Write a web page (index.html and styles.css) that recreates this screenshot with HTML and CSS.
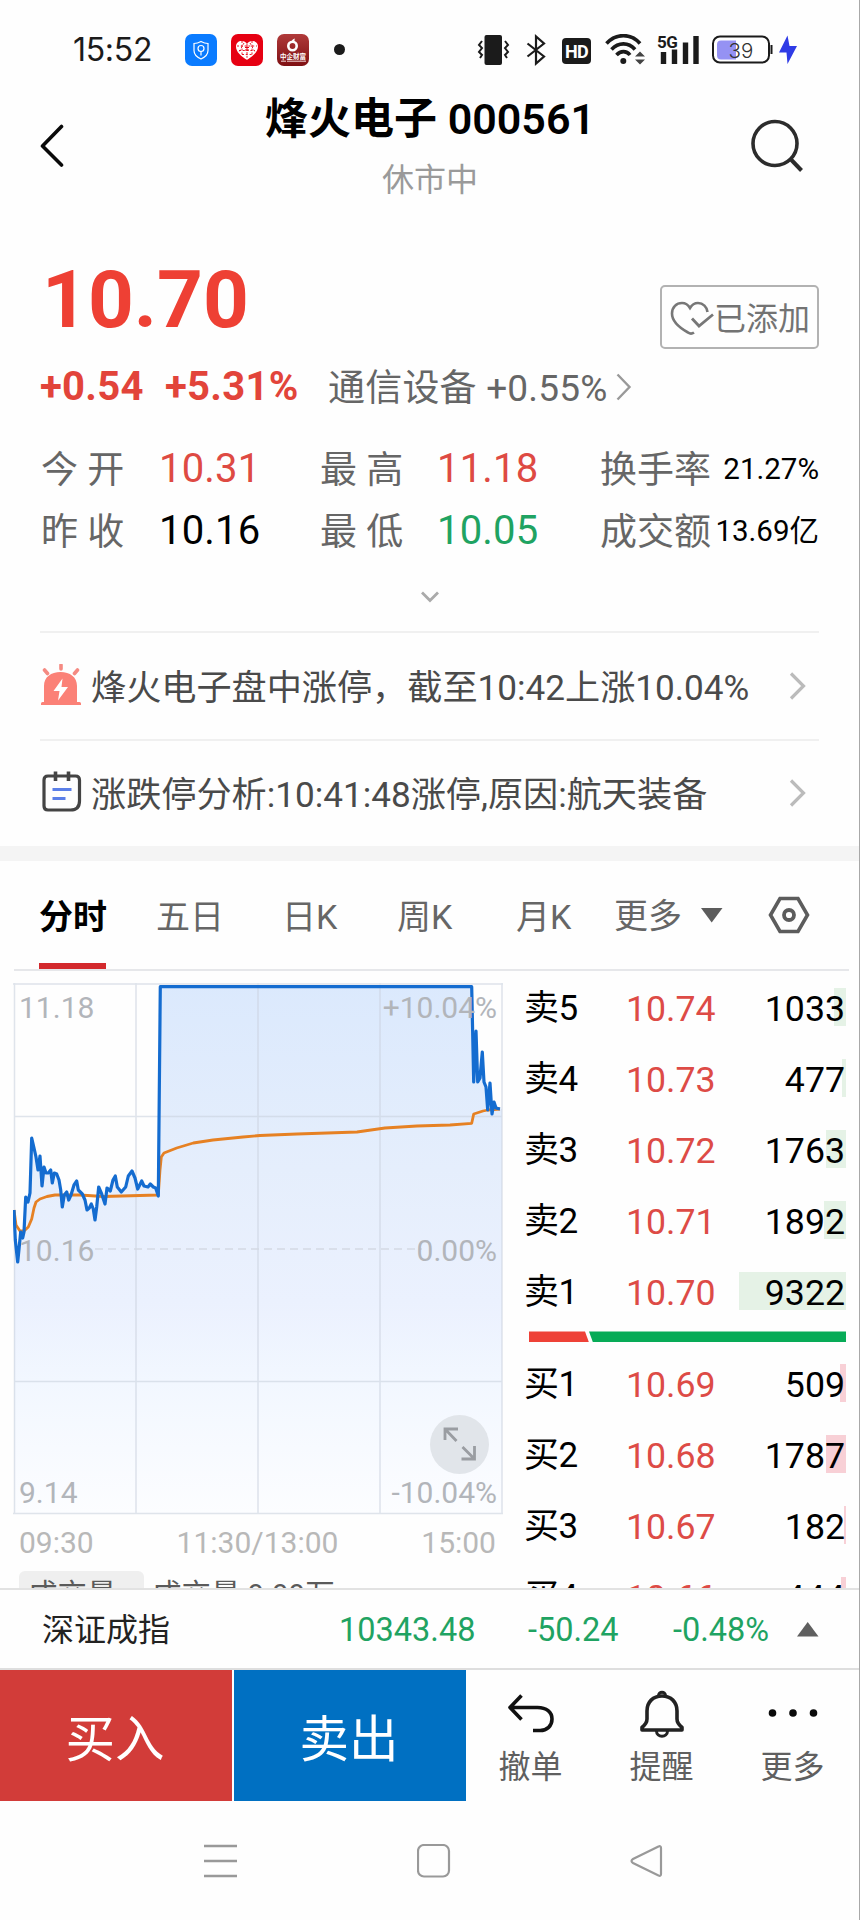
FILE: index.html
```html
<!DOCTYPE html>
<html lang="zh-CN">
<head>
    <meta charset="UTF-8">
    <meta name="viewport" content="width=device-width, initial-scale=1.0">
    <title>烽火电子 000561</title>
    <link rel="stylesheet" href="styles.css">
</head>
<body>
<div class="phone">

    <!-- Status bar -->
    <div class="status-bar">
        <span class="clock">15:52</span>
        <div class="app-icons">
            <svg width="32" height="32" viewBox="0 0 32 32">
                <rect width="32" height="32" rx="7" fill="#0a7bff"/>
                <path d="M16 7.500c2.500 1.300 4.500 1.900 7 2v7c0 4-3 6.700-7 8.500-4-1.800-7-4.500-7-8.500v-7c2.500-.1 4.500-.7 7-2z" fill="none" stroke="#fff" stroke-width="1.200"/>
                <circle cx="16" cy="14.500" r="3" fill="none" stroke="#fff" stroke-width="1.200"/>
                <path d="M16 17.500v4" stroke="#fff" stroke-width="1.200"/>
            </svg>
            <svg width="32" height="32" viewBox="0 0 32 32">
                <rect width="32" height="32" rx="7" fill="#e60012"/>
                <path d="M16 26C10 22 5 18 5 12.500 5 9 7.500 7 10.500 7c2.500 0 4.500 1 5.500 3 1-2 3-3 5.500-3C24.500 7 27 9 27 12.500 27 18 22 22 16 26z" fill="#fff"/>
                <path d="M6 12h20M8 16.500h16M11 20.500h10M11 7v14M21 7v14M16 10v3.500M16 18v8M13 9l-5 9M19 9l5 9" stroke="#e60012" stroke-width="0.900" stroke-dasharray="2 1.800"/>
                <path d="M14 13.500h4M14 16h4M16 12v5" stroke="#e60012" stroke-width="1"/>
            </svg>
            <svg width="32" height="32" viewBox="0 0 32 32">
                <defs>
                    <linearGradient id="maroon" x1="0" y1="0" x2="0" y2="1">
                        <stop offset="0" stop-color="#b03a3a"/>
                        <stop offset="1" stop-color="#7e0f12"/>
                    </linearGradient>
                </defs>
                <rect width="32" height="32" rx="7" fill="url(#maroon)"/>
                <circle cx="15.500" cy="12" r="4.200" fill="none" stroke="#fff" stroke-width="2.600"/>
                <path d="M15 8c-.5-2 1-3 3-3.500-1 1.500 0 3-1 4" fill="#fff"/>
                <text x="16" y="25" class="app-text">中企财富</text>
                <path d="M4 27.200h5M10 27.200h19" stroke="#f3d9d9" stroke-width="1"/>
            </svg>
        </div>
        <span class="status-dot"></span>
        <div class="status-icons">
            <svg width="33" height="32" viewBox="0 0 33 32" class="i-vibrate">
                <rect x="7.500" y="1" width="17.500" height="30" rx="2" fill="#1b1b1b"/>
                <path d="M5 7l-3 4 3 3-3 4 3 3-2 3M28 7l3 4-3 3 3 4-3 3 2 3" fill="none" stroke="#1b1b1b" stroke-width="2"/>
            </svg>
            <svg width="20" height="32" viewBox="0 0 20 32" class="i-bt">
                <path d="M1.500 9.500L18 22.500 10 29.500V2.500L18 9.500 1.500 22.500" fill="none" stroke="#1b1b1b" stroke-width="2.200"/>
            </svg>
            <svg width="29" height="32" viewBox="0 0 29 32" class="i-hd">
                <rect x="0" y="4" width="29" height="26" rx="4" fill="#1b1b1b"/>
                <text x="14.500" y="23.500" class="hd-text">HD</text>
            </svg>
            <svg width="40" height="32" viewBox="0 0 40 32" class="i-wifi">
                <path d="M1.500 9.500C11 -1 26 -1 35 9.500M6.500 15.500c7-7.500 17-7.500 23.500 0M11.500 21c4-4.500 10-4.500 13.500 0" fill="none" stroke="#1b1b1b" stroke-width="3.600"/>
                <circle cx="18.300" cy="27" r="3" fill="#1b1b1b"/>
                <path d="M30 22.500l5-5 5 5zM30 25.500l5 5 5-5z" fill="#444"/>
            </svg>
            <svg width="43" height="32" viewBox="0 0 43 32" class="i-signal">
                <text x="0" y="13.500" class="g-text">5G</text>
                <path d="M6.500 18v12M17.500 15.500V30M28.500 8.500V30M39 2v28" stroke="#1b1b1b" stroke-width="5.400"/>
            </svg>
            <svg width="61" height="32" viewBox="0 0 61 32" class="i-battery">
                <rect x="1" y="2.500" width="56" height="26" rx="7" fill="#fff" stroke="#1b1b1b" stroke-width="2"/>
                <path d="M9 6.500h15v19H9a4 4 0 0 1-4-4v-11a4 4 0 0 1 4-4z" fill="#9592f3"/>
                <path d="M59.500 11v9" stroke="#1b1b1b" stroke-width="2"/>
                <text x="29" y="23.500" class="bat-text">39</text>
            </svg>
            <svg width="18" height="32" viewBox="0 0 18 32">
                <path d="M8.500 1.500L0 18.500h7.500L8.500 30 18 12h-7.500z" fill="#2f3be6"/>
            </svg>
        </div>
    </div>

    <!-- Title -->
    <header class="header">
        <svg width="24" height="44" viewBox="0 0 24 44">
            <path d="M21.500 2.500L2.500 22l19 19" fill="none" stroke="#0a0a0a" stroke-width="3.600" stroke-linecap="round" stroke-linejoin="round"/>
        </svg>
        <div class="title-box">
            <h1>烽火电子 000561</h1>
            <p>休市中</p>
        </div>
        <svg width="54" height="54" viewBox="0 0 54 54">
            <circle cx="25" cy="24.500" r="22" fill="none" stroke="#2c2c2c" stroke-width="3.600"/>
            <path d="M40.500 40l11 11.500" stroke="#2c2c2c" stroke-width="4"/>
        </svg>
    </header>

    <!-- Quote -->
    <section class="quote">
        <div class="price-row">
            <div class="price">10.70</div>
            <div class="added">
                <svg width="44" height="34" viewBox="0 0 44 34">
                    <path d="M24 31.500c-2 1.500-4 1.500-6 0C9 26.500 2 21 2 12.500 2 6 6.500 2 12 2c3.500 0 6 1.500 8 5 2-3.500 5-5 8-5 5 0 9 4 9.500 9" fill="none" stroke="#777" stroke-width="2.600"/>
                    <path d="M22 17.500l7 7.500 14-11.500" fill="none" stroke="#777" stroke-width="2.800"/>
                </svg>
                <span>已添加</span>
            </div>
        </div>
        <div class="change-row">
            <b class="diff">+0.54</b>
            <b class="pct">+5.31%</b>
            <span class="sector">通信设备 +0.55%</span>
            <svg width="16" height="28" viewBox="0 0 16 28">
                <path d="M1.500 1.500L13.500 14 1.500 26.500" fill="none" stroke="#999" stroke-width="2.400"/>
            </svg>
        </div>
        <div class="stats">
            <span class="label">今 开</span><span class="value up">10.31</span>
            <span class="label">最 高</span><span class="value up">11.18</span>
            <span class="label">换手率</span><span class="small">21.27%</span>
            <span class="label">昨 收</span><span class="value">10.16</span>
            <span class="label">最 低</span><span class="value down">10.05</span>
            <span class="label">成交额</span><span class="small">13.69亿</span>
        </div>
        <div class="expand">
            <svg width="18" height="12" viewBox="0 0 18 12">
                <path d="M1 1.500l8 8 8-8" fill="none" stroke="#aaa" stroke-width="2.800"/>
            </svg>
        </div>
    </section>

    <!-- Notices -->
    <div class="notice">
        <svg width="42" height="44" viewBox="0 0 42 44">
            <path d="M4 38V22C4 13 11 8 20.500 8S37 13 37 22v16h2.500q1.500 0 1.500 1.500V41H1v-1.500Q1 38 2.500 38z" fill="#fb8177"/>
            <path d="M21 1v4M4.500 6l3 3.500M37.500 6l-3 3.500" stroke="#f58a82" stroke-width="3.600" stroke-linecap="round"/>
            <path d="M22.500 14.500L13.500 27h6L18 36.500 28 23h-6.500z" fill="#fff"/>
        </svg>
        <span>烽火电子盘中涨停，截至10:42上涨10.04%</span>
        <svg class="arrow" width="18" height="28" viewBox="0 0 18 28">
            <path d="M2 1.500L14.500 14 2 26.500" fill="none" stroke="#bbb" stroke-width="3.200"/>
        </svg>
    </div>
    <div class="notice">
        <svg width="42" height="44" viewBox="0 0 42 44">
            <path d="M8 5h27.500q4 0 4 4v21q0 9-9 9H8q-4 0-4-4V9q0-4 4-4z" fill="none" stroke="#444" stroke-width="3.200"/>
            <path d="M15.500 0.500V10M28.500 0.500V10" stroke="#444" stroke-width="3.600"/>
            <path d="M12.500 18.500h19M12.500 27.500h13" stroke="#5b7fe8" stroke-width="3"/>
        </svg>
        <span>涨跌停分析:10:41:48涨停,原因:航天装备</span>
        <svg class="arrow" width="18" height="28" viewBox="0 0 18 28">
            <path d="M2 1.500L14.500 14 2 26.500" fill="none" stroke="#bbb" stroke-width="3.200"/>
        </svg>
    </div>

    <div class="band"></div>

    <!-- Chart tabs -->
    <nav class="tabs">
        <a class="tab active">分时</a>
        <a class="tab">五日</a>
        <a class="tab">日K</a>
        <a class="tab">周K</a>
        <a class="tab">月K</a>
        <a class="tab more">更多
            <svg width="22" height="15" viewBox="0 0 22 15"><path d="M0 0h21.500L10.700 14.500z" fill="#5c5c5c"/></svg>
        </a>
        <svg width="42" height="38" viewBox="0 0 42 38">
            <path d="M12 2.500h18L39.500 19 30 35.500H12L2.500 19z" fill="none" stroke="#5c5c5c" stroke-width="3.600"/>
            <circle cx="21" cy="19" r="5" fill="none" stroke="#5c5c5c" stroke-width="3.800"/>
        </svg>
    </nav>

    <!-- Chart and order book -->
    <main class="main">
        <div class="chart-col">
            <div class="chart">
                <svg width="490" height="532" viewBox="0 0 490 532">
                    <defs>
                        <linearGradient id="area" gradientUnits="userSpaceOnUse" x1="0" y1="0" x2="0" y2="531">
                            <stop offset="0" stop-color="#dbe9fd"/>
                            <stop offset="0.350" stop-color="#e5eefc"/>
                            <stop offset="0.600" stop-color="#ebf1fe"/>
                            <stop offset="0.750" stop-color="#f2f7ff"/>
                            <stop offset="1" stop-color="#fcfdff"/>
                        </linearGradient>
                    </defs>
                    <path fill="url(#area)" d="M1 227L2.300 257 4.700 279 7.700 249 9.700 255 11 249 12.700 214 15 219 17 210 18.700 155 21 165 23 174 25 187 27 173 29 203 31 184 33 190 35.300 190 37.700 187 39.300 200 41.300 190 43.700 191 46 197 47.700 207 49.300 224 51.300 212 53.700 209 55.700 217 58 212 61 202 63.700 198 65.300 207 69.300 211 72 217 74 227 76.300 225 78.300 221 80.300 226 82 237 83.700 224 85.700 204 88.700 211 92 221 94 205 97.300 208 100 197 102.300 193 104.300 204 108.300 209 112.700 204 115.300 193 119 188 122 195 124.700 206 128.700 198 131 203 135 204 137.300 201 140.300 204 142.700 205 145.300 213 147.300 3.700H458.700L460.700 99 463 48 464.700 99 467 95 469.300 69 471 99 473 104 474.700 127 477 100 479 131 481 119 483 125 489 126V530H1z"/>
                    <path d="M0 1h490M1 133.500h488M1 398.500h488M0 530.500h490M1.500 0v531M123 0v531M245 0v531M367 0v531M489 0v531" fill="none" stroke="#c9d2de" stroke-opacity="0.600" stroke-width="1.500"/>
                    <path d="M82 266h327" stroke="#d3d9e4" stroke-width="1.500" stroke-dasharray="8 5"/>
                    <path fill="none" stroke="#e68123" stroke-width="2.800" stroke-linejoin="round" d="M1 227L3 242 7 248H11L15.300 244 18.700 236 21 225 23 219 27 216 34 213.500 42 212H67L90 213.500 145.300 212 147 187 148.300 174 151 170 163.700 165 180.300 160 200 157 230 154 247 152.500 284 151 344 149 372 145 404 143 437 142 458.700 140.300 460.700 131 470 128 475 127 487 126"/>
                    <path fill="none" stroke="#146cd0" stroke-width="3.200" stroke-linejoin="round" d="M1 227L2.300 257 4.700 279 7.700 249 9.700 255 11 249 12.700 214 15 219 17 210 18.700 155 21 165 23 174 25 187 27 173 29 203 31 184 33 190 35.300 190 37.700 187 39.300 200 41.300 190 43.700 191 46 197 47.700 207 49.300 224 51.300 212 53.700 209 55.700 217 58 212 61 202 63.700 198 65.300 207 69.300 211 72 217 74 227 76.300 225 78.300 221 80.300 226 82 237 83.700 224 85.700 204 88.700 211 92 221 94 205 97.300 208 100 197 102.300 193 104.300 204 108.300 209 112.700 204 115.300 193 119 188 122 195 124.700 206 128.700 198 131 203 135 204 137.300 201 140.300 204 142.700 205 145.300 213 147.300 3.700H458.700L460.700 99 463 48 464.700 99 467 95 469.300 69 471 99 473 104 474.700 127 477 100 479 131 481 119 483 125 487 126"/>
                    <g class="axis">
                        <text x="6" y="35">11.18</text>
                        <text x="6" y="278">10.16</text>
                        <text x="6" y="520">9.14</text>
                        <text x="484" y="35" text-anchor="end">+10.04%</text>
                        <text x="484" y="278" text-anchor="end">0.00%</text>
                        <text x="484" y="520" text-anchor="end">-10.04%</text>
                    </g>
                    <circle cx="446.500" cy="461.500" r="29.500" fill="#e1e5ea"/>
                    <path d="M432 457v-11h13M432 446l11.500 12M448.500 476h13v-13M461 475.500L449.500 464" fill="none" stroke="#9a9da2" stroke-width="2.800"/>
                </svg>
            </div>
            <div class="times">
                <span>09:30</span><span>11:30/13:00</span><span>15:00</span>
            </div>
            <div class="volume">
                <span class="chip">成交量</span>
                <span>成交量 9.99万</span>
            </div>
        </div>

        <div class="book">
            <div class="row"><span class="side">卖5</span><span class="p">10.74</span><span class="v"><i class="bar sell" style="width:12px"></i>1033</span></div>
            <div class="row"><span class="side">卖4</span><span class="p">10.73</span><span class="v"><i class="bar sell" style="width:4px"></i>477</span></div>
            <div class="row"><span class="side">卖3</span><span class="p">10.72</span><span class="v"><i class="bar sell" style="width:20px"></i>1763</span></div>
            <div class="row"><span class="side">卖2</span><span class="p">10.71</span><span class="v"><i class="bar sell" style="width:22px"></i>1892</span></div>
            <div class="row"><span class="side">卖1</span><span class="p">10.70</span><span class="v"><i class="bar sell" style="width:107px"></i>9322</span></div>
            <div class="ratio">
                <div class="ratio-buy"></div>
                <div class="ratio-sell"></div>
            </div>
            <div class="row"><span class="side">买1</span><span class="p">10.69</span><span class="v"><i class="bar buy" style="width:6px"></i>509</span></div>
            <div class="row"><span class="side">买2</span><span class="p">10.68</span><span class="v"><i class="bar buy" style="width:20px"></i>1787</span></div>
            <div class="row"><span class="side">买3</span><span class="p">10.67</span><span class="v"><i class="bar buy" style="width:2px"></i>182</span></div>
            <div class="row"><span class="side">买4</span><span class="p">10.66</span><span class="v"><i class="bar buy" style="width:5px"></i>444</span></div>
        </div>
    </main>

    <!-- Index ticker -->
    <div class="index-row">
        <span class="name">深证成指</span>
        <span class="down">10343.48</span>
        <span class="down">-50.24</span>
        <span class="down">-0.48%</span>
        <svg width="22" height="15" viewBox="0 0 22 15"><path d="M0 14.500h21.500L10.700 0z" fill="#5f5f5f"/></svg>
    </div>

    <!-- Actions -->
    <div class="actions">
        <button class="trade buy-btn">买入</button>
        <button class="trade sell-btn">卖出</button>
        <div class="tool">
            <svg width="48" height="50" viewBox="0 0 48 50">
                <path d="M14.500 6.500L3 18.500l11.500 12M3 18.500h27.500c9 0 14.500 4.500 14.500 11.500s-5 11.500-12 11.500h-7" fill="none" stroke="#111" stroke-width="3.600" stroke-linejoin="round"/>
            </svg>
            <span>撤单</span>
        </div>
        <div class="tool">
            <svg width="48" height="50" viewBox="0 0 48 50">
                <path d="M24 7c-9 0-15 6-15 15v8c0 4-2 6-5 8.500v2.500h40v-2.500c-3-2.500-5-4.500-5-8.500v-8C39 13 33 7 24 7z" fill="none" stroke="#222" stroke-width="3.600" stroke-linejoin="round"/>
                <path d="M20.500 7c0-5 7-5 7 0M18.500 42c0 7 11 7 11 0" fill="none" stroke="#222" stroke-width="3"/>
            </svg>
            <span>提醒</span>
        </div>
        <div class="tool">
            <svg width="50" height="50" viewBox="0 0 50 50">
                <g fill="#0a0a0a"><circle cx="4.500" cy="24" r="3.800"/><circle cx="25" cy="24" r="3.800"/><circle cx="45.500" cy="24" r="3.800"/></g>
            </svg>
            <span>更多</span>
        </div>
    </div>

    <!-- System navigation -->
    <div class="sys-nav">
        <svg width="34" height="34" viewBox="0 0 34 34"><path d="M0 2h33M0 17h33M0 32h33" stroke="#999" stroke-width="2.400"/></svg>
        <svg width="34" height="34" viewBox="0 0 34 34"><rect x="1" y="1" width="31" height="31.500" rx="6" fill="none" stroke="#999" stroke-width="2.200"/></svg>
        <svg width="34" height="34" viewBox="0 0 34 34"><path d="M28.500 2.500L3 15q-3 2 0 4l25.500 12.500q2.500 1 2.500-1.500V4q0-2.500-2.500-1.500z" fill="none" stroke="#999" stroke-width="2.200"/></svg>
    </div>

</div>
</body>
</html>
```
FILE: styles.css
```css
/* General Reset */
* {
    box-sizing: border-box;
}

body, html {
    margin: 0;
    padding: 0;
    background: #fefefe;
    font-family: Roboto, "Noto Sans CJK SC", sans-serif;
    color: #000;
}

svg {
    display: block;
    flex: none;
}

.phone {
    width: 860px;
    height: 1920px;
    overflow: hidden;
    border-right: 1px solid #a8a8a8;
}

.up {
    color: #de4a43;
}

.down {
    color: #1fa362;
}

/* Status bar */
.status-bar {
    display: flex;
    align-items: center;
    height: 84px;
    padding: 15px 62px 0 73px;
}

.clock {
    width: 112px;
    font-family: Inter, sans-serif;
    font-size: 32px;
    line-height: 34px;
    color: #1b1b1b;
    letter-spacing: -0.300px;
}

.app-icons {
    display: flex;
    gap: 14px;
}

.app-text {
    font: bold 6.500px "Noto Sans CJK SC", sans-serif;
    fill: #fff;
    text-anchor: middle;
}

.status-dot {
    width: 11px;
    height: 11px;
    margin-left: 25px;
    border-radius: 50%;
    background: #1b1b1b;
}

.status-icons {
    display: flex;
    margin-left: auto;
}

.i-vibrate, .i-bt {
    margin-right: 16px;
}

.i-hd {
    margin-right: 14px;
}

.i-wifi, .i-signal {
    margin-right: 12px;
}

.i-battery {
    margin-right: 6px;
}

.hd-text {
    font: bold 18px Roboto, sans-serif;
    fill: #fff;
    text-anchor: middle;
    letter-spacing: -0.800px;
}

.g-text {
    font: bold 17px Roboto, sans-serif;
    fill: #1b1b1b;
    letter-spacing: -0.500px;
}

.i-signal {
    overflow: visible;
}

.bat-text {
    font: 300 20.500px Inter, sans-serif;
    fill: #333;
    text-anchor: middle;
}

/* Header */
.header {
    display: flex;
    align-items: center;
    justify-content: space-between;
    height: 123px;
    padding: 0 55px 0 40px;
}

.title-box {
    padding: 3px 0 0 46px;
    text-align: center;
}

.title-box h1 {
    margin: 0;
    font-size: 43px;
    line-height: 66px;
    font-weight: 600;
}

.title-box p {
    margin: 0;
    font-size: 32px;
    line-height: 57px;
    color: #9a9a9a;
}

/* Quote */
.quote {
    padding: 43px 40px 0;
}

.price-row {
    display: flex;
    justify-content: space-between;
    height: 107px;
}

.price {
    padding-left: 2px;
    font-size: 80px;
    line-height: 101px;
    font-weight: bold;
    color: #ee4034;
}

.added {
    display: flex;
    align-items: center;
    width: 159px;
    height: 64px;
    margin-top: 35px;
    padding: 1px 0 0 8px;
    border: 2px solid #b2b2b2;
    border-radius: 5px;
    font-size: 32px;
    line-height: 60px;
    color: #737373;
    white-space: nowrap;
}

.added span {
    padding-top: 2px;
}

.change-row {
    display: flex;
    align-items: center;
    height: 60px;
    font-size: 40px;
    line-height: 60px;
    color: #e2443a;
}

.diff {
    width: 125px;
    letter-spacing: 0.300px;
}

.pct {
    width: 163px;
    letter-spacing: 0.300px;
}

.sector {
    width: 288px;
    padding-top: 3px;
    font-size: 37px;
    letter-spacing: 0.200px;
    color: #666;
}

.stats {
    display: grid;
    grid-template-columns: 119px 160px 118px 162px 115px 1fr;
    grid-auto-rows: 62px;
    margin-top: 21px;
    line-height: 62px;
    white-space: nowrap;
}

.label {
    padding: 2px 0 0 1px;
    font-size: 37px;
    color: #666;
}

.value {
    font-size: 40px;
    letter-spacing: 0.200px;
}

.small {
    justify-self: end;
    font-size: 29.500px;
}

.expand {
    display: flex;
    align-items: center;
    justify-content: center;
    height: 69px;
}

/* Notices */
.notice {
    display: flex;
    align-items: center;
    height: 107.500px;
    margin: 0 40px;
    border-top: 2px solid #f0f0f0;
    font-size: 35.150px;
    color: #4a4a4a;
    white-space: nowrap;
}

.notice span {
    margin-left: 9px;
    padding-top: 4px;
    line-height: 50px;
}

.notice .arrow {
    margin-left: auto;
    margin-right: 12px;
}

.band {
    height: 15px;
    background: #f4f4f4;
}

/* Tabs */
.tabs {
    display: grid;
    grid-template-columns: 117px 126px 115px 119px 98px 154px 1fr;
    align-items: center;
    height: 110px;
    margin: 0 10px 0 14px;
    padding-left: 25px;
    border-bottom: 2px solid #e6e7ea;
}

.tab {
    height: 108px;
    font-size: 34px;
    line-height: 113px;
    color: #666;
    white-space: nowrap;
}

.tab.active {
    width: 67px;
    border-bottom: 6px solid #d3292d;
    font-weight: bold;
    color: #000;
}

.tab.more {
    display: flex;
    align-items: center;
    gap: 19px;
    padding-top: 2px;
}

.tab.more svg {
    margin-top: -2px;
}

/* Chart and order book */
.main {
    display: flex;
    height: 617px;
    overflow: hidden;
}

.chart-col {
    width: 503px;
    padding: 12px 0 0 13px;
}

.axis {
    font-size: 30px;
    fill: #b2b5ba;
}

.times {
    display: flex;
    justify-content: space-between;
    padding: 3px 7px 0 6px;
    font-size: 30px;
    line-height: 50px;
    color: #b8b8b8;
}

.volume {
    display: flex;
    gap: 8px;
    margin: 3px 0 0 6px;
    font-size: 29.500px;
    line-height: 48px;
    color: #5a5a5a;
}

.chip {
    width: 125px;
    height: 50px;
    padding-left: 9px;
    border-radius: 6px;
    background: #efefef;
}

.book {
    flex: 1;
    padding: 2px 13px 0 21px;
}

.row {
    display: grid;
    grid-template-columns: 102px 1fr 107px;
    height: 70.900px;
    font-size: 35.700px;
    line-height: 72px;
}

.row .side {
    font-size: 35px;
    letter-spacing: -0.600px;
}

.row .p {
    color: #dd4b46;
}

.row .v {
    position: relative;
    z-index: 0;
    padding-right: 1px;
    text-align: right;
}

/* Depth bar behind the volume */
.bar {
    position: absolute;
    right: 0;
    top: 15px;
    height: 38px;
    z-index: -1;
}

.bar.sell {
    background: #e5f2e6;
}

.bar.buy {
    background: #f8d0d6;
}

.ratio {
    display: flex;
    height: 11px;
    margin: 4px 0 7px 5px;
}

.ratio-buy {
    width: 60px;
    background: #ee4137;
    clip-path: polygon(0 0, 56px 0, 60px 100%, 0 100%);
}

.ratio-sell {
    flex: 1;
    background: #07ab57;
    clip-path: polygon(0 0, 100% 0, 100% 100%, 4px 100%);
}

/* Index ticker */
.index-row {
    display: grid;
    grid-template-columns: 297px 189px 145px 124px 1fr;
    align-items: center;
    height: 80px;
    padding: 1px 0 0 42px;
    border-top: 2px solid #e2e2e2;
    background: #fefefe;
    font-size: 32.500px;
    line-height: 60px;
}

.index-row .name {
    font-size: 32px;
    color: #222;
}

/* Actions */
.actions {
    display: flex;
    height: 133px;
    border-top: 2px solid #dedede;
}

.trade {
    width: 232px;
    height: 131px;
    margin: 0 2px 0 0;
    padding: 0 2px 0 0;
    border: none;
    font-family: inherit;
    font-size: 49.500px;
    color: #fff;
}

.buy-btn {
    background: #d23c39;
}

.sell-btn {
    margin: 0;
    background: #0070c2;
}

.tool {
    flex: 1;
    display: flex;
    flex-direction: column;
    align-items: center;
    padding: 19px 2px 0 0;
    font-size: 32px;
    line-height: 57px;
    color: #5f5f5f;
}

/* System navigation */
.sys-nav {
    display: flex;
    gap: 179px;
    padding: 43px 0 0 204px;
}
```
